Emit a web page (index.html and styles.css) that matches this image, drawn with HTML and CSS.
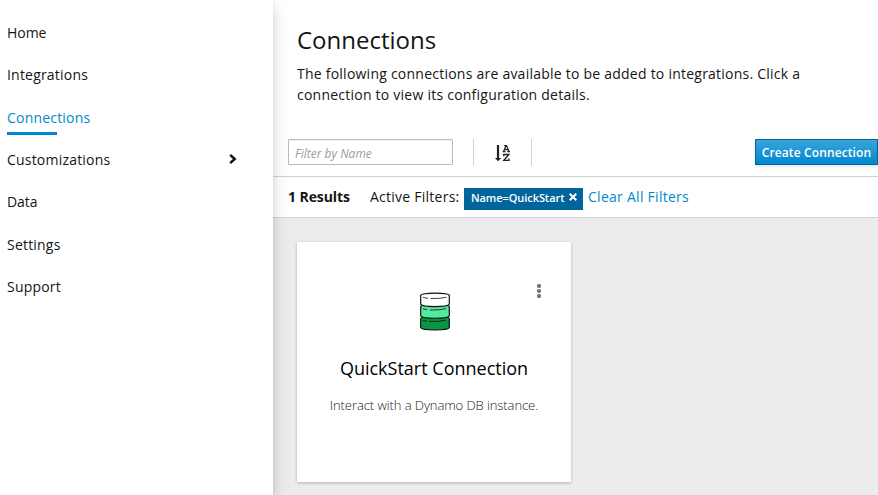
FILE: index.html
```html
<!DOCTYPE html>
<html lang="en">
<head>
<meta charset="utf-8">
<title>Connections</title>
<link rel="stylesheet" href="styles.css">
</head>
<body>
<div class="app">
  <nav class="sidebar">
    <a class="nav-item home">Home</a>
    <a class="nav-item">Integrations</a>
    <a class="nav-item active"><span>Connections</span></a>
    <a class="nav-item">Customizations
      <svg class="chevron" width="8" height="10" viewBox="0 0 8 10"><path d="M1.2 .9 5.7 5 1.2 9.1" fill="none" stroke="#151515" stroke-width="2.5"/></svg>
    </a>
    <a class="nav-item home">Data</a>
    <a class="nav-item">Settings</a>
    <a class="nav-item">Support</a>
  </nav>
  <main class="main">
    <header class="page-header">
      <h1>Connections</h1>
      <p>The following connections are available to be added to integrations. Click a connection to view its configuration details.</p>
    </header>
    <div class="toolbar">
      <input class="filter" type="text" placeholder="Filter by Name">
      <div class="sort">
        <svg width="16" height="18" viewBox="0 0 16 18" fill="none" stroke="#222">
          <path d="M3 1v14" stroke-width="2.2"/>
          <path d="M0 14h6.2L3.1 17.2z" fill="#222" stroke="none"/>
          <path d="M8.6 7.5 11 1.7h.6L14 7.5M9.6 5.5h3.7M9.2 1.6h2.3M7.7 7.6h2.8M12.2 7.6H15" stroke-width="1.25"/>
          <path d="M8.7 12.2v-1.7h5.1L8.8 16.3h5.2v-1.8" stroke-width="1.35"/>
        </svg>
      </div>
      <button class="create">Create Connection</button>
    </div>
    <div class="results">
      <strong class="count">1 Results</strong>
      <span class="active-label">Active Filters:</span>
      <span class="chip"><span>Name=QuickStart</span><svg width="8" height="8" viewBox="0 0 8 8"><path d="M.7.7 7.3 7.3M7.3.7.7 7.3" stroke="#fff" stroke-width="2"/></svg></span>
      <a class="clear">Clear All Filters</a>
    </div>
    <section class="cards">
      <article class="card">
        <svg class="kebab" width="4" height="14" viewBox="0 0 4 14" fill="#72767b"><circle cx="2" cy="2" r="2.1"/><circle cx="2" cy="7" r="2.1"/><circle cx="2" cy="12" r="2.1"/></svg>
        <svg class="database" width="30" height="39" viewBox="0 0 30 39" stroke="#111" stroke-width="1.2">
          <path d="M.7 26.5v9.3C2 38.7 28 38.7 29.3 35.8v-9.3C28 23.5 2 23.5 .7 26.5z" fill="#0b9444"/>
          <path d="M.7 14.5V24C2 27 28 27 29.3 24v-9.5C28 11.500 2 11.500 .7 14.500z" fill="#54e8a0"/>
          <path d="M.7 3.3v9C2 15.3 28 15.3 29.3 12.3v-9C28 .4 2 .4 .7 3.3z" fill="#fff"/>
          <path d="M3 5.3q2 .7 5 .9M10.500 6.500q9 .3 16-1.200M3 16.800q2 .7 4 .8M10 18q9 .3 16-1.300M3 28.300q2 .7 4 .9M9 29.500q10 .3 17-1.300" fill="none" stroke-width=".8"/>
        </svg>
        <h2>QuickStart Connection</h2>
        <p>Interact with a Dynamo DB instance.</p>
      </article>
    </section>
  </main>
</div>
</body>
</html>
```
FILE: styles.css
```css
* { box-sizing: border-box; }
body {
  margin: 0;
  overflow: hidden;
  background: #fff;
  color: #151515;
  font: 14px/21px "Open Sans", sans-serif;
}
h1, h2, p { margin: 0; font-weight: 400; }
.app { display: flex; height: 495px; }
.sidebar {
  position: relative;
  flex: none;
  width: 273px;
  padding: 11.5px 0 0 7px;
  background: #fff;
  box-shadow: 0 8px 16px rgba(3, 3, 3, .16), 0 0 6px rgba(3, 3, 3, .08);
}
.nav-item {
  display: flex;
  align-items: center;
  justify-content: space-between;
  height: 42.33px;
  padding-right: 36px;
  letter-spacing: .2px;
}
.nav-item.home { letter-spacing: -.05px; }
.chevron { margin-bottom: 2px; }
.active { position: relative; color: #0088ce; }
.active::after {
  content: "";
  position: absolute;
  left: 0;
  bottom: 3.5px;
  width: 50px;
  height: 3px;
  background: #0088ce;
}
.main { flex: 1; min-width: 0; display: flex; flex-direction: column; }
.page-header, .toolbar, .results { flex: none; }
.page-header { height: 139px; padding: 22px 50px 0 24px; }
.page-header h1 { font-size: 24px; line-height: 36px; margin-bottom: 5px; }
.page-header p { letter-spacing: .235px; }
.toolbar {
  display: flex;
  align-items: flex-start;
  height: 38px;
  padding-left: 15px;
  border-bottom: 1px solid #d1d1d1;
}
.filter {
  width: 165px;
  height: 26px;
  padding: 3px 6px 1px;
  border: 1px solid #bbb;
  border-radius: 1px;
  box-shadow: inset 0 1px 1px rgba(3, 3, 3, .075);
  font: 12px/20px "Open Sans", sans-serif;
}
.filter::placeholder { color: #9c9c9c; font-style: italic; opacity: 1; }
.sort {
  display: flex;
  justify-content: center;
  align-items: center;
  width: 59px;
  height: 27px;
  margin-left: 20px;
  border: solid #d1d1d1;
  border-width: 0 1px;
}
.create {
  width: 123px;
  height: 26px;
  margin-left: auto;
  padding: 2px 0 0;
  border: 1px solid #00659c;
  background: linear-gradient(#39a5dc, #0088ce);
  box-shadow: 0 2px 3px rgba(3, 3, 3, .1);
  color: #fff;
  font: 600 12px/20px "Open Sans", sans-serif;
  letter-spacing: .12px;
  white-space: nowrap;
}
.results {
  display: flex;
  align-items: center;
  height: 41px;
  padding: 0 0 2px 15px;
  border-bottom: 1px solid #d1d1d1;
  white-space: nowrap;
}
.count { width: 82px; font-weight: 700; letter-spacing: -.08px; }
.active-label { width: 94px; letter-spacing: .25px; }
.chip {
  display: flex;
  align-items: center;
  justify-content: space-between;
  width: 119px;
  height: 22px;
  margin: 5px 5px 0 0;
  padding: 0 6px 3px 7px;
  background: #00659c;
  color: #fff;
  font-size: 11px;
  font-weight: 600;
  letter-spacing: -.07px;
}
.clear { color: #0088ce; letter-spacing: .27px; }
.cards { flex: 1; padding: 24px; background: #ececec; }
.card {
  position: relative;
  display: flex;
  flex-direction: column;
  align-items: center;
  width: 274px;
  height: 240px;
  padding-top: 50px;
  background: #fff;
  box-shadow: 0 1px 3px rgba(3, 3, 3, .25);
}
.kebab { position: absolute; top: 42px; right: 30px; }
.database { margin-left: 1px; }
.card h2 { margin-top: 24px; color: #000; font-size: 18px; line-height: 27px; }
.card p { margin-top: 13px; color: #222; font-size: 13px; font-weight: 300; line-height: 20px; letter-spacing: -.08px; }
```
